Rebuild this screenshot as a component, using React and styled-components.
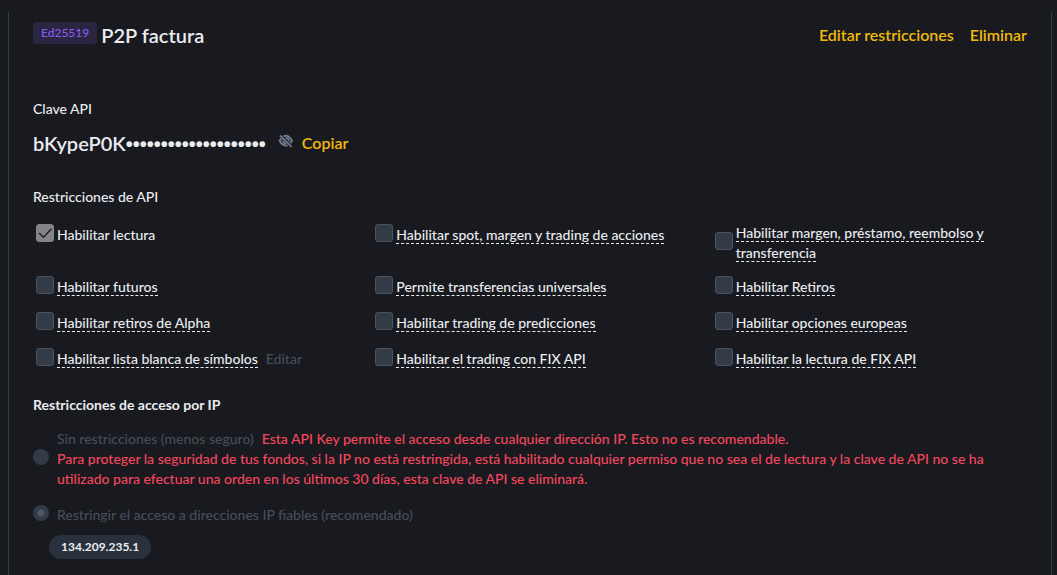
import React from "react";
import styled, { createGlobalStyle } from "styled-components";

const permissions = [
  { id: "read", label: "Habilitar lectura", checked: true, plain: true },
  { id: "spot", label: "Habilitar spot, margen y trading de acciones" },
  { id: "margin", label: "Habilitar margen, préstamo, reembolso y transferencia" },
  { id: "futures", label: "Habilitar futuros" },
  { id: "universal", label: "Permite transferencias universales" },
  { id: "withdraw", label: "Habilitar Retiros" },
  { id: "alpha", label: "Habilitar retiros de Alpha" },
  { id: "predictions", label: "Habilitar trading de predicciones" },
  { id: "options", label: "Habilitar opciones europeas" },
  { id: "symbols", label: "Habilitar lista blanca de símbolos", edit: true },
  { id: "fixTrade", label: "Habilitar el trading con FIX API" },
  { id: "fixRead", label: "Habilitar la lectura de FIX API" },
];

const ipList = ["134.209.235.1"];

const HiddenEye = () => (
  <svg width="16" height="16" viewBox="0 0 16 16" fill="none" stroke="#707a8a" aria-hidden="true">
    <path d="M2 2.500L13.600 13.800" strokeWidth="1.800" />
    <path d="M5.400 3.200C9.200 1.800 12.200 4.200 14 7.800L12.200 10.200" strokeWidth="2" />
    <path d="M7.600 5.300C9.800 5 11 6.400 10.800 8.300" strokeWidth="1.800" />
    <path d="M3.400 5.600L1.600 7.700C3.600 11.400 6.200 13 9.600 12.400" strokeWidth="2" />
    <path d="M5 7.400C5 9.400 6.400 10.500 8.200 10.400" strokeWidth="1.600" />
  </svg>
);

const Permission = ({ id, label, checked, plain, edit }) => {
  return (
    <PermissionItem>
      <CheckWrap>
        <Checkbox type="checkbox" id={id} defaultChecked={checked} disabled />
        {checked && (
          <svg width="18" height="18" viewBox="0 0 18 18" fill="none" aria-hidden="true">
            <path d="M3 9l4.500 4.200L15.500 4.800" stroke="#1e2026" strokeWidth="1.500" />
          </svg>
        )}
      </CheckWrap>
      <label htmlFor={id}>{plain ? label : <Hint>{label}</Hint>}</label>
      {edit && <EditButton disabled>Editar</EditButton>}
    </PermissionItem>
  );
};

const App = () => {
  return (
    <>
      <GlobalStyle />
      <Card>
        <Header>
          <Badge>Ed25519</Badge>
          <Title>P2P factura</Title>
          <Actions>
            <LinkButton>Editar restricciones</LinkButton>
            <LinkButton>Eliminar</LinkButton>
          </Actions>
        </Header>

        <Caption>Clave API</Caption>
        <KeyRow>
          <KeyValue>
            bKypeP0K<Dots>••••••••••••••••••••</Dots>
          </KeyValue>
          <IconButton aria-label="Mostrar clave">
            <HiddenEye />
          </IconButton>
          <LinkButton>Copiar</LinkButton>
        </KeyRow>

        <Caption>Restricciones de API</Caption>
        <Permissions>
          {permissions.map((p) => (
            <Permission key={p.id} {...p} />
          ))}
        </Permissions>

        <SectionTitle>Restricciones de acceso por IP</SectionTitle>
        <RadioList>
          <RadioRow>
            <Radio type="radio" name="ip" id="ipAny" disabled />
            <div>
              <Muted htmlFor="ipAny">Sin restricciones (menos seguro)</Muted>
              <Warning>
                Esta API Key permite el acceso desde cualquier dirección IP. Esto no es
                recomendable.
                <br />
                Para proteger la seguridad de tus fondos, si la IP no está restringida, está
                habilitado cualquier permiso que no sea el de lectura y la clave de API no se ha
                utilizado para efectuar una orden en los últimos 30 días, esta clave de API se
                eliminará.
              </Warning>
            </div>
          </RadioRow>
          <RadioRow>
            <Radio type="radio" name="ip" id="ipTrusted" defaultChecked disabled />
            <Muted htmlFor="ipTrusted">
              Restringir el acceso a direcciones IP fiables (recomendado)
            </Muted>
          </RadioRow>
        </RadioList>
        <IpList>
          {ipList.map((ip) => (
            <IpTag key={ip}>{ip}</IpTag>
          ))}
        </IpList>
      </Card>
    </>
  );
};

const GlobalStyle = createGlobalStyle`
  * {
    box-sizing: border-box;
  }
  body {
    margin: 0;
    background: #181a20;
    color: #eaecef;
    font-family: Lato, "Liberation Sans", sans-serif;
    font-size: 14px;
    font-weight: 500;
    line-height: 20px;
  }
  button {
    padding: 0;
    border: 0;
    background: none;
    font: inherit;
  }
`;
const Card = styled.main`
  margin: 12px 5px 0 8px;
  padding: 8px 24px 16px;
  border: 1px solid #333b47;
  border-width: 0 1px;
`;
const Header = styled.header`
  display: flex;
  align-items: center;
  margin-bottom: 49px;
`;
const Badge = styled.span`
  margin: 0 4px 4px 0;
  padding: 0 8px;
  border-radius: 3px;
  background: #2a2540;
  color: #8b5cf6;
  font-size: 12px;
  line-height: 22px;
`;
const Title = styled.h1`
  flex: 1;
  margin: 0;
  font-size: 20px;
  font-weight: 600;
  line-height: 30px;
`;
const Actions = styled.div`
  display: flex;
  gap: 16px;
`;
const LinkButton = styled.button`
  color: #f0b90b;
  font-size: 16px;
  font-weight: 600;
  line-height: 24px;
  cursor: pointer;
`;
const Caption = styled.h2`
  margin: 0;
  font-size: 14px;
  font-weight: 500;
`;
const KeyRow = styled.div`
  display: flex;
  align-items: center;
  margin: 10px 0 30px;
`;
const KeyValue = styled.span`
  margin-right: 12px;
  font-size: 20px;
  font-weight: 600;
  line-height: 28px;
`;
const Dots = styled.span`
  font-family: "Liberation Sans", sans-serif;
  line-height: 20px;
`;
const IconButton = styled.button`
  display: flex;
  margin: 0 8px 4px 0;
  cursor: pointer;
`;
const Permissions = styled.div`
  display: grid;
  grid-template-columns: repeat(3, 1fr);
  row-gap: 12px;
  margin: 16px -24px 24px 0;
`;
const PermissionItem = styled.div`
  display: flex;
  align-items: center;
  align-self: start;
  min-height: 24px;
  padding: 0 24px 0 3px;
`;
const CheckWrap = styled.span`
  position: relative;
  flex: none;
  height: 18px;
  margin: 0 3px 4px 0;
  svg {
    position: absolute;
    inset: 0;
  }
`;
const Checkbox = styled.input`
  appearance: none;
  display: block;
  width: 18px;
  height: 18px;
  margin: 0;
  border: 1px solid #4a5362;
  border-radius: 3px;
  background: #333b47;
  &:checked {
    border-color: #848589;
    background: #848589;
  }
`;
const Hint = styled.span`
  border-bottom: 1px dashed #eaecef;
  cursor: help;
`;
const EditButton = styled.button`
  margin-left: 8px;
  color: #474d57;
`;
const SectionTitle = styled.h2`
  margin: 0 0 14px;
  font-size: 14px;
  font-weight: 700;
`;
const RadioList = styled.div`
  display: grid;
  gap: 16px;
`;
const RadioRow = styled.div`
  display: flex;
  align-items: center;
`;
const Radio = styled.input`
  appearance: none;
  flex: none;
  width: 16px;
  height: 16px;
  margin: 0 8px 4px 0;
  border-radius: 50%;
  background: #333b47;
  &:checked {
    background: radial-gradient(circle, #4f5867 3px, #333b47 4px);
  }
`;
const Muted = styled.label`
  margin-right: 8px;
  color: #474d57;
`;
const Warning = styled.span`
  color: #f6465d;
`;
const IpList = styled.div`
  display: flex;
  flex-wrap: wrap;
  gap: 8px;
  padding: 10px 0 0 16px;
`;
const IpTag = styled.span`
  padding: 0 12px;
  border-radius: 12px;
  background: #29313d;
  font-size: 12px;
  font-weight: 700;
  line-height: 24px;
`;

export default App;
